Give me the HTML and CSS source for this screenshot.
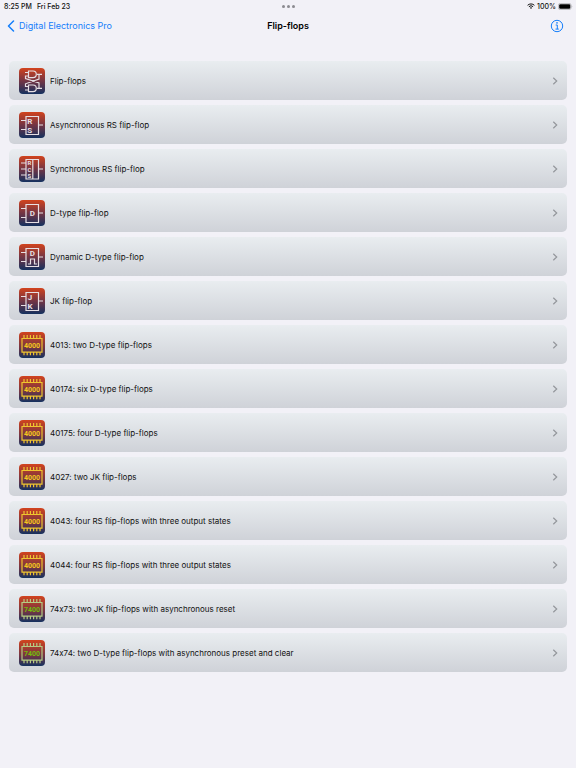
FILE: index.html
```
<!DOCTYPE html>
<html lang="en">
  <head>
    <meta charset="utf-8">
    <meta name="viewport" content="width=device-width, initial-scale=1">
    <title>Flip-flops</title>
    <link rel="stylesheet" href="styles.css">
  </head>
  <body>
    <!-- shapes shared by the rows -->
    <svg class="defs" aria-hidden="true">
      <symbol id="chevron" viewBox="0 0 6 8">
        <path d="M1.300 .8 4.700 4 1.300 7.200" />
      </symbol>
      <symbol id="box" viewBox="0 0 26 26">
        <path d="M7 4.500h12.500v18H7zM2 8.500h5M2 17.500h5M19.500 13H24" />
      </symbol>
      <symbol id="chip" viewBox="0 0 26 26">
        <path d="M3 6.500h20v13.700H3z" />
        <path d="M5 3v3.500M8.200 3v3.500M11.400 3v3.500M14.600 3v3.500M17.800 3v3.500M21 3v3.500M5 20v3.300M8.200 20v3.300M11.400 20v3.300M14.600 20v3.300M17.800 20v3.300M21 20v3.300" />
      </symbol>
    </svg>

    <div class="status">
      <div class="status-left">
        <span>8:25 PM</span>
        <span>Fri Feb 23</span>
      </div>
      <div class="dots"><i></i><i></i><i></i></div>
      <div class="status-right">
        <svg class="wifi" viewBox="0 0 8 6">
          <path d="M.6 2.300a4.900 4.900 0 0 1 6.800 0M1.900 3.700a3 3 0 0 1 4.200 0" />
          <path class="wifi-dot" d="M4 6 2.900 4.800a1.600 1.600 0 0 1 2.200 0z" />
        </svg>
        <span>100%</span>
        <svg class="battery" viewBox="0 0 15 7">
          <rect class="battery-case" x=".4" y=".4" width="12.700" height="6.200" rx="2" />
          <rect x="1.200" y="1.200" width="11.100" height="4.600" rx="1.200" />
          <path class="battery-cap" d="M13.800 2.500q1 1 0 2z" />
        </svg>
      </div>
    </div>

    <header class="navbar">
      <a class="back" href="#">
        <svg viewBox="0 0 8 12"><path d="M6.500 1 1.500 6l5 5" /></svg>
        <span>Digital Electronics Pro</span>
      </a>
      <h1>Flip-flops</h1>
      <button class="info" type="button" aria-label="Info">
        <svg viewBox="0 0 14 14">
          <circle cx="7" cy="7" r="5.700" />
          <path d="M5.700 6h1.600v4.100M5.500 10.100h3.300" />
          <circle class="info-dot" cx="7" cy="3.900" r=".8" />
        </svg>
      </button>
    </header>

    <main>
      <nav class="list">
        <a class="row" href="#">
          <svg class="icon" viewBox="0 0 26 26">
            <path d="M9.500 3h4.500a3.300 3.300 0 0 1 0 6.600H9.500zM9.500 17h4.500a3.300 3.300 0 0 1 0 6.600H9.500z" />
            <path d="M6 4.500h3.500M9.500 8H6.500v2.500L20 15v5.300M6 22h3.500M9.500 18.500H6.500v-2.700L20 11V6.300" />
            <path d="M18 6.300h5M18 20.300h5" />
          </svg>
          <span>Flip-flops</span>
          <svg class="chevron"><use href="#chevron" /></svg>
        </a>
        <a class="row" href="#">
          <svg class="icon" viewBox="0 0 26 26">
            <use href="#box" />
            <text x="10.800" y="12">R</text><text x="10.800" y="21">S</text>
          </svg>
          <span>Asynchronous RS flip-flop</span>
          <svg class="chevron"><use href="#chevron" /></svg>
        </a>
        <a class="row" href="#">
          <svg class="icon rcs" viewBox="0 0 26 26">
            <path d="M7 3.500h12.500v19.500H7zM13.800 3.500v19.500M2 7h5M2 13h5M2 19h5M19.500 13H24" />
            <text x="10.400" y="9.300">R</text><text x="10.400" y="15.500">C</text><text x="10.400" y="21.700">S</text>
          </svg>
          <span>Synchronous RS flip-flop</span>
          <svg class="chevron"><use href="#chevron" /></svg>
        </a>
        <a class="row" href="#">
          <svg class="icon" viewBox="0 0 26 26">
            <use href="#box" />
            <text x="13.300" y="15.800">D</text>
          </svg>
          <span>D-type flip-flop</span>
          <svg class="chevron"><use href="#chevron" /></svg>
        </a>
        <a class="row" href="#">
          <svg class="icon" viewBox="0 0 26 26">
            <use href="#box" />
            <text x="13.300" y="12">D</text>
            <path d="M9 20h2.500v-5h4v5H18" />
          </svg>
          <span>Dynamic D-type flip-flop</span>
          <svg class="chevron"><use href="#chevron" /></svg>
        </a>
        <a class="row" href="#">
          <svg class="icon" viewBox="0 0 26 26">
            <use href="#box" />
            <text x="11" y="12">J</text><text x="11" y="21">K</text>
          </svg>
          <span>JK flip-flop</span>
          <svg class="chevron"><use href="#chevron" /></svg>
        </a>
        <a class="row" href="#">
          <svg class="icon cmos" viewBox="0 0 26 26"><use href="#chip" /><text x="13" y="16">4000</text></svg>
          <span>4013: two D-type flip-flops</span>
          <svg class="chevron"><use href="#chevron" /></svg>
        </a>
        <a class="row" href="#">
          <svg class="icon cmos" viewBox="0 0 26 26"><use href="#chip" /><text x="13" y="16">4000</text></svg>
          <span>40174: six D-type flip-flops</span>
          <svg class="chevron"><use href="#chevron" /></svg>
        </a>
        <a class="row" href="#">
          <svg class="icon cmos" viewBox="0 0 26 26"><use href="#chip" /><text x="13" y="16">4000</text></svg>
          <span>40175: four D-type flip-flops</span>
          <svg class="chevron"><use href="#chevron" /></svg>
        </a>
        <a class="row" href="#">
          <svg class="icon cmos" viewBox="0 0 26 26"><use href="#chip" /><text x="13" y="16">4000</text></svg>
          <span>4027: two JK flip-flops</span>
          <svg class="chevron"><use href="#chevron" /></svg>
        </a>
        <a class="row" href="#">
          <svg class="icon cmos" viewBox="0 0 26 26"><use href="#chip" /><text x="13" y="16">4000</text></svg>
          <span>4043: four RS flip-flops with three output states</span>
          <svg class="chevron"><use href="#chevron" /></svg>
        </a>
        <a class="row" href="#">
          <svg class="icon cmos" viewBox="0 0 26 26"><use href="#chip" /><text x="13" y="16">4000</text></svg>
          <span>4044: four RS flip-flops with three output states</span>
          <svg class="chevron"><use href="#chevron" /></svg>
        </a>
        <a class="row" href="#">
          <svg class="icon ttl" viewBox="0 0 26 26"><use href="#chip" /><text x="13" y="16">7400</text></svg>
          <span>74x73: two JK flip-flops with asynchronous reset</span>
          <svg class="chevron"><use href="#chevron" /></svg>
        </a>
        <a class="row" href="#">
          <svg class="icon ttl" viewBox="0 0 26 26"><use href="#chip" /><text x="13" y="16">7400</text></svg>
          <span>74x74: two D-type flip-flops with asynchronous preset and clear</span>
          <svg class="chevron"><use href="#chevron" /></svg>
        </a>
      </nav>
    </main>
  </body>
</html>
```

FILE: styles.css
```
* {
  margin: 0;
  padding: 0;
  box-sizing: border-box;
}
body {
  background-color: #f2f1f7;
  color: #111;
  font-family: Inter, "Liberation Sans", sans-serif;
  font-size: 8px;
  /* keeps the x in 74x73 a plain letter */
  font-feature-settings: "calt" 0;
}
a {
  color: inherit;
  text-decoration: none;
}
svg {
  display: block;
  fill: none;
}
.defs {
  position: absolute;
  width: 0;
  height: 0;
}

/* status bar */
.status {
  display: grid;
  grid-template-columns: 1fr auto 1fr;
  align-items: center;
  height: 12px;
  padding: 0 3px 0 4px;
  font-size: 7px;
  font-weight: 500;
}
.status-left {
  display: flex;
  gap: 5px;
}
.status-right {
  display: flex;
  align-items: center;
  justify-content: flex-end;
  gap: 2px;
}
.dots {
  display: flex;
  gap: 2px;
}
.dots i {
  width: 3px;
  height: 3px;
  border-radius: 50%;
  background-color: #8b8b90;
}
.wifi {
  width: 8px;
  height: 6px;
  stroke: #111;
}
.wifi-dot {
  fill: #111;
  stroke: none;
}
.battery {
  width: 15px;
  height: 7px;
  fill: #000;
}
.battery-case {
  fill: none;
  stroke: #a3a3a8;
  stroke-width: 0.7;
}
.battery-cap {
  fill: #a3a3a8;
}

/* navigation bar */
.navbar {
  display: grid;
  grid-template-columns: 1fr auto 1fr;
  align-items: center;
  height: 27px;
  padding: 0 7px;
}
.back {
  display: flex;
  align-items: center;
  gap: 4px;
  color: #147efb;
  font-size: 9px;
}
.back svg {
  width: 8px;
  height: 12px;
  stroke: #147efb;
  stroke-width: 1.5;
  stroke-linecap: round;
  stroke-linejoin: round;
}
h1 {
  color: #000;
  font-size: 9px;
  font-weight: 600;
}
.info {
  justify-self: end;
  margin-right: 5px;
  border: none;
  background: none;
}
.info svg {
  width: 14px;
  height: 14px;
  stroke: #147efb;
}
.info-dot {
  fill: #147efb;
  stroke: none;
}

/* list of circuits */
main {
  padding: 22px 9px 32px;
}
.list {
  display: flex;
  flex-direction: column;
  gap: 5px;
}
.row {
  display: flex;
  align-items: center;
  height: 39px;
  padding: 0 9px 0 10px;
  gap: 5px;
  border-radius: 5px;
  background: linear-gradient(#e9edf0, #cfd2d8);
}
.row span {
  flex: 1;
}
.icon {
  width: 26px;
  height: 26px;
  border-radius: 4px;
  background: linear-gradient(#d2431d, #733544 50%, #15315f);
  stroke: #e6dfe3;
  stroke-width: 1.2;
}
.icon text {
  fill: #e6dfe3;
  stroke: none;
  font-family: Roboto, "Liberation Sans", sans-serif;
  font-size: 8px;
  font-weight: 700;
  text-anchor: middle;
}
.rcs text {
  font-size: 6px;
}
.icon.cmos,
.icon.ttl {
  background: linear-gradient(#d2431d, #733544 60%, #15315f);
}
.cmos text,
.ttl text {
  font-size: 7px;
}
.cmos {
  stroke: #efc52f;
}
.cmos text {
  fill: #f6c81d;
}
.ttl {
  stroke: #b5cc83;
}
.ttl text {
  fill: #73bd0b;
}
.chevron {
  width: 6px;
  height: 8px;
  stroke: #94979c;
  stroke-width: 1.2;
}
```
